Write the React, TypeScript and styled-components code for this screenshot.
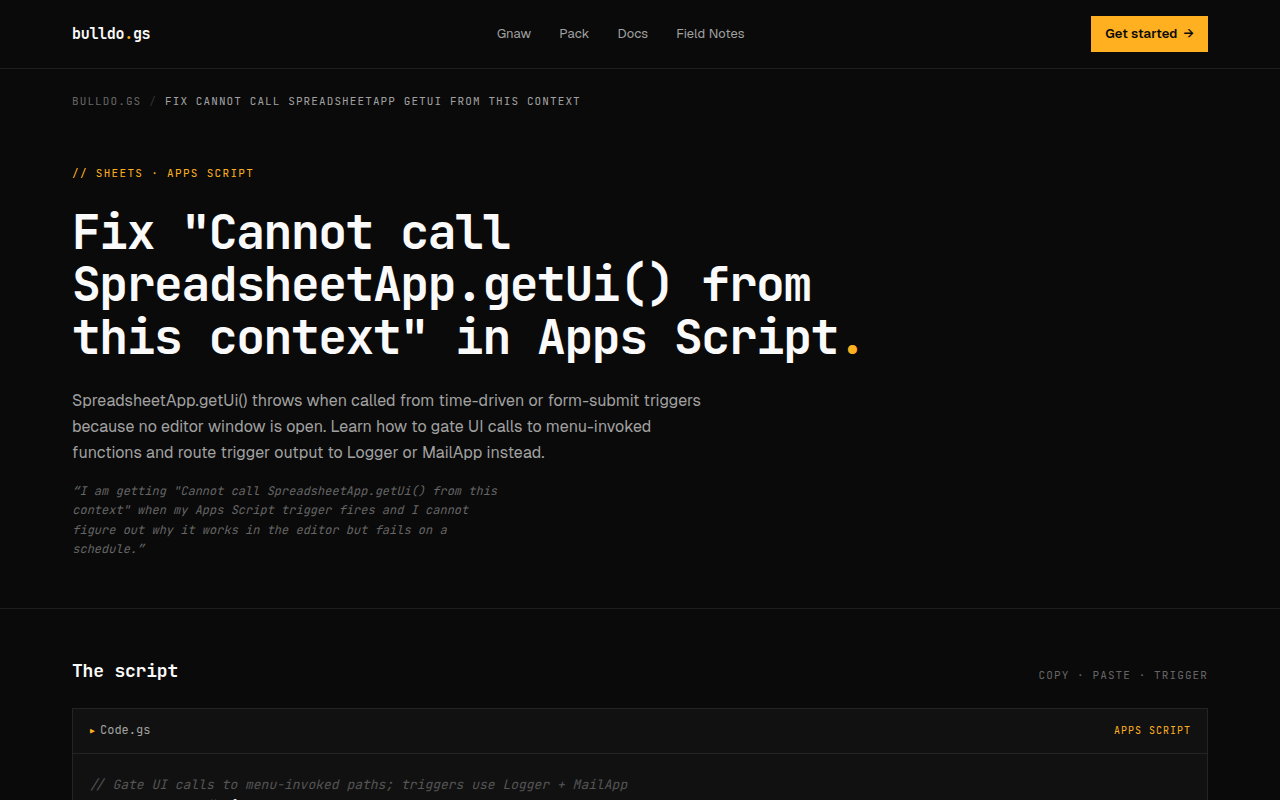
import React from 'react';
import styled, { createGlobalStyle } from 'styled-components';

const mono = `"JetBrains Mono", "DejaVu Sans Mono", "Liberation Mono", monospace`;
const sans = `Geist, Inter, "Liberation Sans", sans-serif`;
const amber = '#ffb020';

const Global = createGlobalStyle`
  *, *::before, *::after { box-sizing: border-box; }
  html, body { margin: 0; background: #0a0a0a; }
  body { height: 800px; overflow: hidden; font-family: ${sans}; color: #fafafa; }
  h1, h2, p, pre { margin: 0; }
`;

const Page = styled.div`height: 800px; overflow: hidden; background: #0a0a0a;`;
const Header = styled.header`
  display: flex; align-items: center; justify-content: space-between;
  height: 69px; padding: 0 72px; border-bottom: 1px solid #1f1f1f;
`;
const Logo = styled.a`
  font: 700 15px/20px ${mono}; letter-spacing: -0.3px; color: #fafafa;
`;
const Accent = styled.span`color: ${amber};`;
const Nav = styled.nav`display: flex; gap: 28px;`;
const NavLink = styled.a`font-size: 13px; line-height: 20px; letter-spacing: 0.08px; color: #a1a1a1;`;
const Cta = styled.button`
  display: flex; align-items: center; gap: 6px; height: 36px; padding: 0 14px;
  border: 0; background: ${amber}; color: #0a0a0a; font: 600 13px/20px ${sans}; letter-spacing: 0.11px;
`;
const Crumbs = styled.div`
  display: flex; gap: 8px; padding: 24px 72px 0; height: 56px;
  font: 400 11px/17px ${mono}; letter-spacing: 1.1px; color: #a1a1a1; text-transform: uppercase; white-space: pre;
`;
const Crumb = styled.span<{ $c: string }>`color: ${p => p.$c};`;
const Hero = styled.section`
  height: 484px; padding: 40px 72px 0; border-bottom: 1px solid #1f1f1f;
`;
const Eyebrow = styled.p`font: 400 11px/17px ${mono}; letter-spacing: 1.32px; color: ${amber};`;
const Title = styled.h1`
  margin-top: 23.6px; font: 700 48px/52.8px ${mono}; letter-spacing: -1.44px; white-space: nowrap;
`;
const Lead = styled.p`
  margin-top: 24px; font-size: 16px; line-height: 26px; letter-spacing: 0.08px; color: #a1a1a1; white-space: nowrap;
`;
const Quote = styled.p`
  display: grid; grid-template-rows: 19px 20px 19px 19px; justify-items: start;
  margin-top: 16px; font: 400 12px/19px ${mono}; color: #666; white-space: nowrap;
`;
/* Slants the upright face about its baseline, keeping the upright letterforms. */
const Slanted = styled.span<{ $baseline: number }>`
  display: block; transform: skewX(-14deg); transform-origin: 0 ${p => p.$baseline}px;
`;
const Script = styled.section`padding: 48px 72px 0;`;
const ScriptHead = styled.div`
  display: flex; align-items: flex-start; justify-content: space-between; height: 51px;
`;
const Subtitle = styled.h2`font: 700 18px/28px ${mono}; letter-spacing: -0.2px;`;
const Hint = styled.span`padding-top: 9px; font: 400 11px/18px ${mono}; letter-spacing: 1.1px; color: #666;`;
const Card = styled.div`border: 1px solid #242424; background: #111; height: 300px;`;
const CardBar = styled.div`
  display: flex; align-items: center; justify-content: space-between; height: 45px; padding: 0 16px;
  border-bottom: 1px solid #242424;
`;
const File = styled.span`
  display: flex; align-items: center; gap: 5px; padding-bottom: 2px;
  font: 400 12px/18px ${mono}; color: #a1a1a1;
`;
const Marker = styled.span`width: 6px; padding: 3px 0 0 1px; font-size: 8px; line-height: 15px; color: ${amber};`;
const Tag = styled.span`font: 400 10px/16px ${mono}; letter-spacing: 1px; color: ${amber};`;
const Code = styled.pre`padding: 20px 16px; font: 400 13px/21px ${mono}; color: #fafafa;`;
const CodeLine = styled.div`height: 21px;`;
const Comment = styled(Slanted)`color: #555;`;
const Dim = styled.span`color: #a1a1a1;`;

const quoteLines = [
  '“I am getting "Cannot call SpreadsheetApp.getUi() from this',
  'context" when my Apps Script trigger fires and I cannot',
  'figure out why it works in the editor but fails on a',
  'schedule.”',
];

export default function App() {
  return (
    <Page>
      <Global />
      <Header>
        <Logo>bulldo<Accent>.</Accent>gs</Logo>
        <Nav>
          {['Gnaw', 'Pack', 'Docs', 'Field Notes'].map(t => <NavLink key={t}>{t}</NavLink>)}
        </Nav>
        <Cta>Get started <span>→</span></Cta>
      </Header>
      <Crumbs>
        <Crumb $c="#666">bulldo.gs</Crumb><Crumb $c="#333">/</Crumb>
        <Crumb $c="#a1a1a1">Fix Cannot call SpreadsheetApp getUi from this context</Crumb>
      </Crumbs>
      <Hero>
        <Eyebrow>// SHEETS · APPS SCRIPT</Eyebrow>
        <Title>Fix "Cannot call<br />SpreadsheetApp.getUi() from<br />this context" in Apps Script<Accent>.</Accent></Title>
        <Lead>SpreadsheetApp.getUi() throws when called from time-driven or form-submit triggers<br />because no editor window is open. Learn how to gate UI calls to menu-invoked<br />functions and route trigger output to Logger or MailApp instead.</Lead>
        <Quote>{quoteLines.map(l => <Slanted key={l} $baseline={14}>{l}</Slanted>)}</Quote>
      </Hero>
      <Script>
        <ScriptHead><Subtitle>The script</Subtitle><Hint>COPY · PASTE · TRIGGER</Hint></ScriptHead>
        <Card>
          <CardBar><File><Marker>▶</Marker>Code.gs</File><Tag>APPS SCRIPT</Tag></CardBar>
          <Code>
            <CodeLine><Comment $baseline={15}>// Gate UI calls to menu-invoked paths; triggers use Logger + MailApp</Comment></CodeLine>
            <CodeLine>function onOpen<Dim>()</Dim> {'{'}</CodeLine>
          </Code>
        </Card>
      </Script>
    </Page>
  );
}
